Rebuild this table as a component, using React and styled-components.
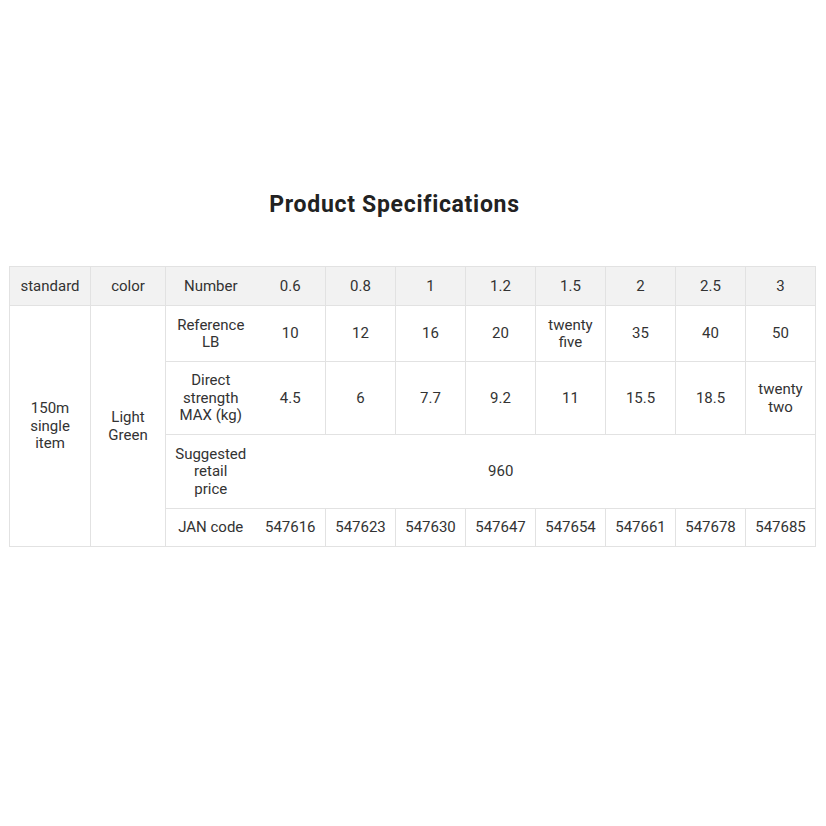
import React from "react";
import styled, { createGlobalStyle } from "styled-components";

const Global = createGlobalStyle`
  html, body { margin: 0; padding: 0; background: #fff; }
  body { font-family: Roboto, "Noto Sans", "Liberation Sans", sans-serif; color: #333; }
`;

const Page = styled.div`
  width: 826px;
  height: 826px;
  padding: 191px 10px 0 9px;
  box-sizing: border-box;
`;

const Title = styled.h1`
  margin: 0 0 47px;
  padding-right: 36px;
  text-align: center;
  font-size: 23px;
  line-height: 28px;
  font-weight: 700;
  letter-spacing: 0.7px;
  color: #222;
`;

const Table = styled.table`
  width: 807px;
  border-collapse: collapse;
  table-layout: fixed;
  font-size: 15px;
  line-height: 17.5px;
`;

const Row = styled.tr`
  height: ${(p) => p.h}px;
  background: ${(p) => (p.head ? "#f2f2f2" : "#fff")};
`;

const Cell = styled.td`
  border: 1px solid #e2e2e2;
  text-align: center;
  vertical-align: middle;
  padding: 1px ${(p) => p.pr || 0}px 0 0;
  color: #333;
  ${(p) => p.noRight && "border-right: none;"}
  ${(p) => p.noLeft && "border-left: none;"}
`;

const sizes = ["0.6", "0.8", "1", "1.2", "1.5", "2", "2.5", "3"];
const lb = ["10", "12", "16", "20", "twenty five", "35", "40", "50"];
const strength = ["4.5", "6", "7.7", "9.2", "11", "15.5", "18.5", "twenty two"];
const jan = ["547616", "547623", "547630", "547647", "547654", "547661", "547678", "547685"];

const Values = ({ list }) =>
  list.map((v, i) => (
    <Cell key={i} noLeft={i === 0}>
      {v.includes(" ") && isNaN(v) ? v.split(" ").map((w, j) => <div key={j}>{w}</div>) : v}
    </Cell>
  ));

export default function App() {
  return (
    <Page>
      <Global />
      <Title>Product Specifications</Title>
      <Table>
        <colgroup>
          <col style={{ width: 81 }} />
          <col style={{ width: 75 }} />
          <col style={{ width: 90 }} />
          {sizes.map((s) => (
            <col key={s} style={{ width: 70 }} />
          ))}
        </colgroup>
        <tbody>
          <Row h={39} head>
            <Cell>standard</Cell>
            <Cell>color</Cell>
            <Cell noRight>Number</Cell>
            <Values list={sizes} />
          </Row>
          <Row h={56}>
            <Cell rowSpan={5}>
              150m<br />single<br />item
            </Cell>
            <Cell rowSpan={5}>
              Light<br />Green
            </Cell>
            <Cell noRight>Reference<br />LB</Cell>
            <Values list={lb} />
          </Row>
          <Row h={73}>
            <Cell noRight>Direct<br />strength<br />MAX (kg)</Cell>
            <Values list={strength} />
          </Row>
          <Row h={74}>
            <Cell noRight>Suggested<br />retail<br />price</Cell>
            <Cell colSpan={8} noLeft pr={69}>960</Cell>
          </Row>
          <Row h={38}>
            <Cell noRight>JAN code</Cell>
            <Values list={jan} />
          </Row>
        </tbody>
      </Table>
    </Page>
  );
}
